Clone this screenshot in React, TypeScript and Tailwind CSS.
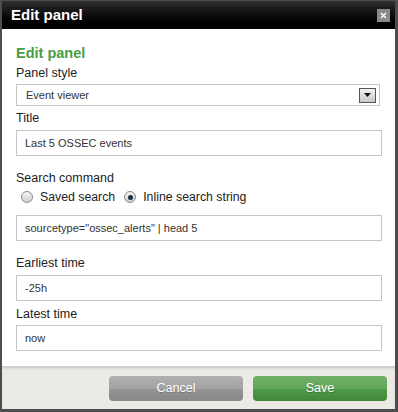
import React from "react";

function Field({ label, value, top }: { label: string; value: string; top: string }) {
  return (
    <div className={top}>
      <div className="h-[16px] leading-[16px] text-[12.5px] text-[#222]">{label}</div>
      <div className="mt-[4px] flex h-[26px] items-center border border-[#c6c6c6] bg-white pl-[8px] text-[11px] text-[#333]">
        {value}
      </div>
    </div>
  );
}

function Radio({ checked, label }: { checked?: boolean; label: string }) {
  return (
    <label className="flex items-center">
      <span className="flex h-[12px] w-[12px] items-center justify-center rounded-full border border-[#8d8d8d] bg-linear-to-b from-[#f4f4f4] to-[#cfcfcf]">
        {checked && <span className="h-[5px] w-[5px] rounded-full bg-[#1c2f4d]" />}
      </span>
      <span className="ml-[7px] text-[12.3px] text-[#222]">{label}</span>
    </label>
  );
}

export default function App() {
  return (
    <div className="flex h-[412px] w-[398px] flex-col border-t border-l-2 border-r-[3px] border-b-[3px] border-[#4d4d4d] bg-white font-['Liberation_Sans',Arial,sans-serif]">
      {/* title bar */}
      <div className="flex h-[28px] shrink-0 items-center justify-between bg-linear-to-b from-[#303030] to-[#000] pl-[9px] pr-[5px]">
        <span className="text-[15px] font-bold text-white">Edit panel</span>
        <button className="flex h-[13px] w-[13px] items-center justify-center bg-[#8a8a8a]">
          <svg width="7" height="7" viewBox="0 0 7 7">
            <path d="M1 1l5 5M6 1L1 6" stroke="#fff" strokeWidth="1.3" />
          </svg>
        </button>
      </div>

      {/* form */}
      <div className="flex-1 pl-[14px] pr-[13px] pt-[15px]">
        <h2 className="h-[18px] text-[14.5px] font-bold leading-[18px] text-[#4a9d45]">Edit panel</h2>

        <div className="mt-[3px]">
          <div className="h-[16px] leading-[16px] text-[12.5px] text-[#222]">Panel style</div>
          <div className="mt-[3px] flex h-[22px] w-[364px] items-center justify-between border border-[#c6c6c6] pl-[9px] pr-[3px] text-[11px] text-[#333]">
            <span>Event viewer</span>
            <span className="flex h-[15px] w-[17px] items-center justify-center border border-[#555] bg-linear-to-b from-[#f2f2f2] to-[#c9c9c9]">
              <svg width="7" height="4" viewBox="0 0 7 4">
                <path d="M0 0h7L3.5 4z" fill="#111" />
              </svg>
            </span>
          </div>
        </div>

        <Field label="Title" value="Last 5 OSSEC events" top="mt-[4px]" />

        <div className="mt-[14px] h-[16px] leading-[16px] text-[12.5px] text-[#222]">Search command</div>
        <div className="mt-[1px] flex h-[20px] items-center gap-[9px] pl-[5px]">
          <Radio label="Saved search" />
          <Radio checked label="Inline search string" />
        </div>
        <div className="mt-[8px] flex h-[26px] items-center border border-[#c6c6c6] pl-[8px] text-[11px] text-[#333]">
          sourcetype="ossec_alerts" | head 5
        </div>

        <Field label="Earliest time" value="-25h" top="mt-[14px]" />
        <div className="mt-[5px]">
          <div className="h-[16px] leading-[16px] text-[12.5px] text-[#222]">Latest time</div>
          <div className="mt-[3px] flex h-[26px] items-center border border-[#c6c6c6] pl-[8px] text-[11px] text-[#333]">
            now
          </div>
        </div>
      </div>

      {/* footer */}
      <div className="flex h-[43px] shrink-0 justify-end gap-[10px] bg-[#ebeae5] pr-[8px] pt-[10px] shadow-[inset_0_3px_3px_-1px_rgba(0,0,0,0.15)]">
        <button className="h-[25px] w-[134px] rounded-[4px] bg-[linear-gradient(to_bottom,#b0b0b0,#a3a3a3_50%,#959595_50%,#888)] text-[12.5px] text-white [text-shadow:0_1px_0_rgba(0,0,0,0.2)]">
          Cancel
        </button>
        <button className="h-[25px] w-[134px] rounded-[4px] bg-[linear-gradient(to_bottom,#70b066,#62a659_50%,#4f9847_50%,#3f8a39)] text-[12.5px] text-white [text-shadow:0_1px_0_rgba(0,0,0,0.2)]">
          Save
        </button>
      </div>
    </div>
  );
}
